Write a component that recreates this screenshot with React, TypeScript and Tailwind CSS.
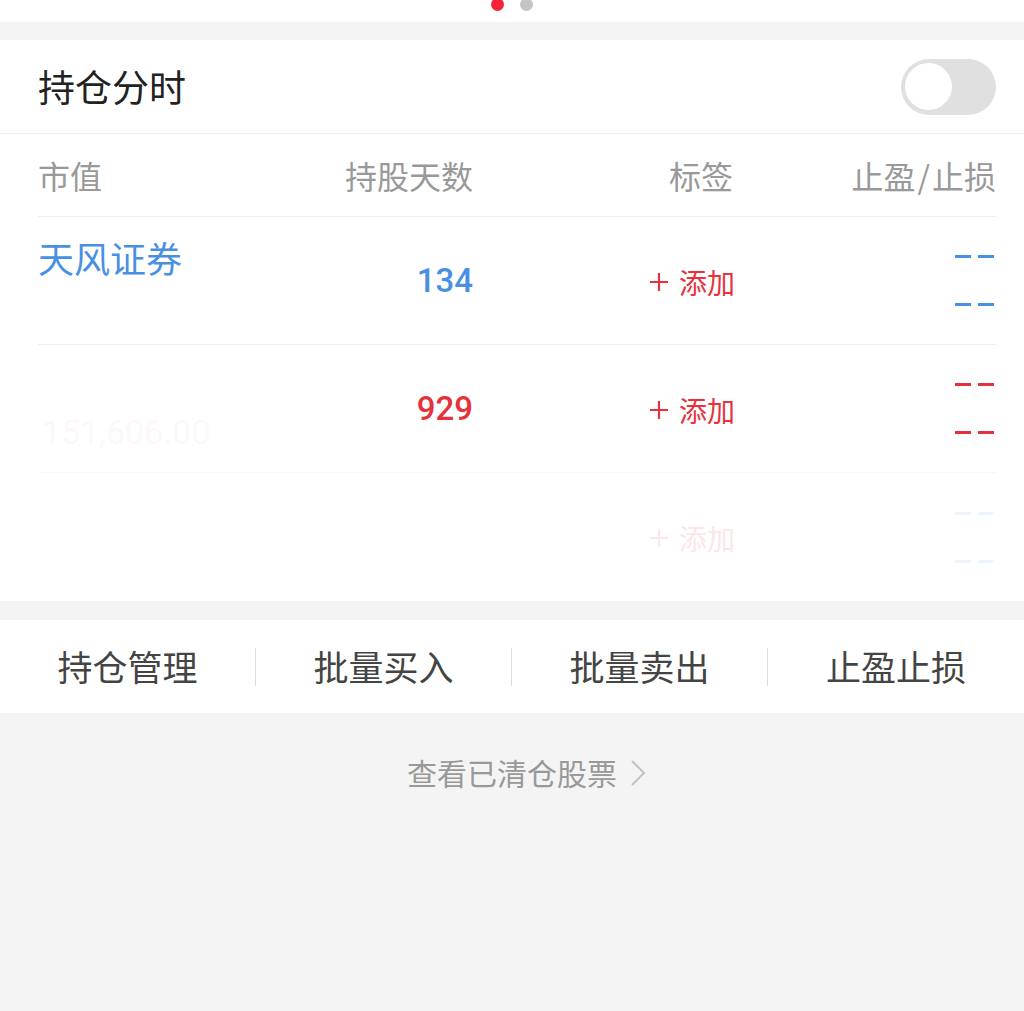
import React from "react";

const cjk = "font-['Noto_Sans_CJK_SC','Noto_Sans',sans-serif]";

type Row = {
  name?: string;
  value?: string;
  days?: string;
  tone: "blue" | "red";
  faded?: boolean;
};

const rows: Row[] = [
  { name: "天风证券", days: "134", tone: "blue" },
  { value: "151,606.00", days: "929", tone: "red" },
  { tone: "blue", faded: true },
];

function Plus({ color }: { color: string }) {
  return (
    <svg width="20" height="20" viewBox="0 0 20 20" className="shrink-0">
      <path d="M10 1v18M1 10h18" stroke={color} strokeWidth="2.2" fill="none" />
    </svg>
  );
}

function Dashes({ color }: { color: string }) {
  return (
    <div className="flex gap-[7px]">
      <span className={`block h-[3px] w-[16px] ${color}`} />
      <span className={`block h-[3px] w-[16px] ${color}`} />
    </div>
  );
}

function HoldingRow({ row, idx }: { row: Row; idx: number }) {
  const dash = row.faded ? "bg-[#eef4fd]" : row.tone === "blue" ? "bg-[#4a90e2]" : "bg-[#e5323a]";
  const dayColor = row.tone === "blue" ? "text-[#4a90e2]" : "text-[#e5323a]";
  const addColor = row.faded ? "#fde6e8" : "#e8313c";
  const border = idx === 0 ? "border-b border-[#eeeeee]" : idx === 1 ? "border-b border-[#f8f8f8]" : "";
  return (
    <div className={`grid h-[128px] grid-cols-[240px_195px_262px_1fr] ${border}`}>
      <div className="flex flex-col pt-[18px]">
        <span className={`${cjk} h-[44px] text-[36px] leading-[44px] text-[#4a90e2]`}>
          {row.name ?? ""}
        </span>
        {row.value && (
          <span className="mt-[8px] pl-[4px] font-['Roboto',sans-serif] text-[34px] leading-none text-[#fdf8f8]">
            {row.value}
          </span>
        )}
      </div>
      <div className="flex items-center justify-end">
        {row.days && (
          <span className={`font-['Roboto',sans-serif] text-[33px] font-medium ${dayColor}`}>
            {row.days}
          </span>
        )}
      </div>
      <div className="flex items-center justify-end gap-[10px] pt-[2px]">
        <Plus color={addColor} />
        <span className={`${cjk} text-[28px] leading-none`} style={{ color: addColor }}>
          添加
        </span>
      </div>
      <div className="flex flex-col items-end justify-center gap-[45px] pr-[2px]">
        <Dashes color={dash} />
        <Dashes color={dash} />
      </div>
    </div>
  );
}

export default function App() {
  const actions = ["持仓管理", "批量买入", "批量卖出", "止盈止损"];
  return (
    <div className={`${cjk} flex h-[1011px] w-full flex-col overflow-hidden bg-[#f4f4f4]`}>
      {/* pager dots */}
      <div className="flex h-[22px] items-start justify-center gap-[16px] overflow-hidden bg-white">
        <span className="-mt-[2px] block h-[13px] w-[13px] rounded-full bg-[#f5233a]" />
        <span className="-mt-[2px] block h-[13px] w-[13px] rounded-full bg-[#c4c4c4]" />
      </div>

      <div className="mt-[18px] bg-white">
        {/* title */}
        <div className="flex h-[94px] items-center justify-between border-b border-[#eeeeee] pl-[38px] pr-[28px]">
          <span className="text-[37px] text-[#222222]">持仓分时</span>
          <div className="flex h-[56px] w-[95px] items-center rounded-full bg-[#e0e0e0] px-[4px]">
            <span className="block h-[47px] w-[47px] rounded-full bg-white" />
          </div>
        </div>

        <div className="ml-[38px] mr-[28px]">
          {/* column headers */}
          <div className="grid h-[83px] grid-cols-[240px_195px_262px_1fr] items-center border-b border-[#eeeeee] text-[32px] text-[#999999]">
            <span>市值</span>
            <span className="text-right">持股天数</span>
            <span className="pr-[2px] text-right">标签</span>
            <span className="text-right">
              止盈<span className="mx-[2px]">/</span>止损
            </span>
          </div>
          {rows.map((r, i) => (
            <HoldingRow key={i} row={r} idx={i} />
          ))}
        </div>
      </div>

      {/* actions */}
      <div className="mt-[19px] grid h-[93px] grid-cols-4 items-center bg-white">
        {actions.map((a, i) => (
          <div
            key={a}
            className={`flex h-[38px] items-center justify-center text-[35px] text-[#444444] ${
              i < actions.length - 1 ? "border-r border-[#dddddd]" : ""
            }`}
          >
            {a}
          </div>
        ))}
      </div>

      {/* cleared stocks link */}
      <div className="mt-[37px] flex justify-center">
        <div className="relative flex items-center">
          <span className="text-[30px] text-[#999999]">查看已清仓股票</span>
          <svg
            width="16"
            height="28"
            viewBox="0 0 16 28"
            className="absolute left-[calc(100%+13px)] top-1/2 -translate-y-1/2"
          >
            <path d="M2 2l12 12L2 26" stroke="#c2c2c2" strokeWidth="2" fill="none" />
          </svg>
        </div>
      </div>
    </div>
  );
}
